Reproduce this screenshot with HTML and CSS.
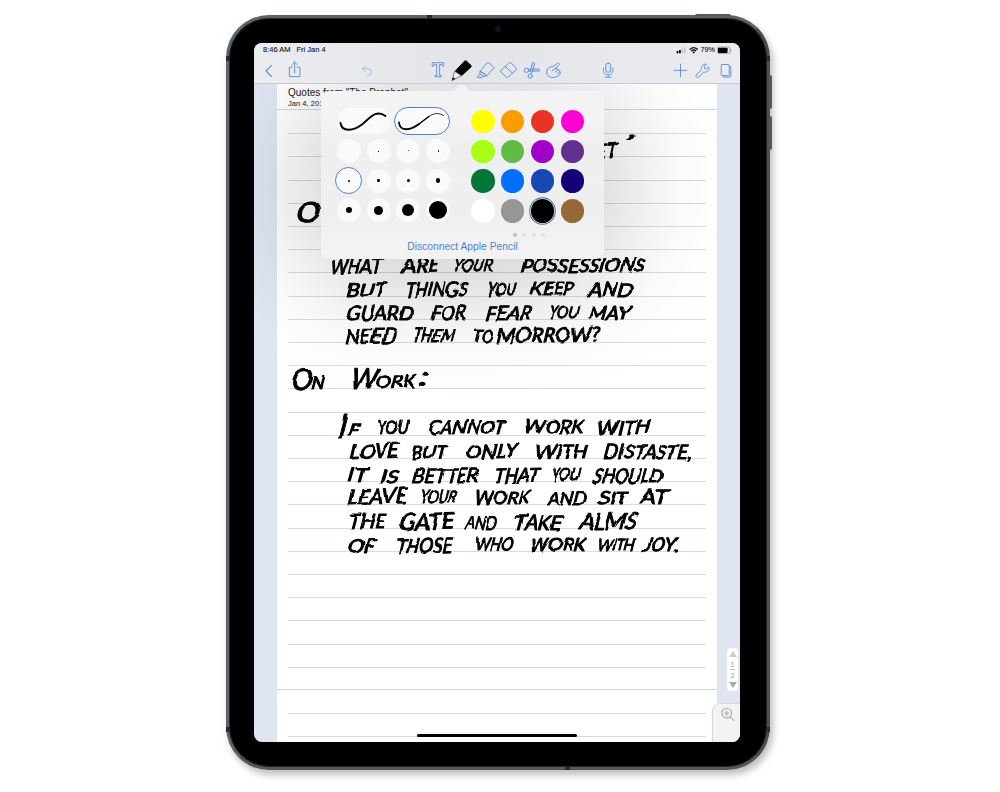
FILE: index.html
```html
<!DOCTYPE html>
<html lang="en">
<head>
<meta charset="utf-8">
<title>Notes</title>
<link rel="stylesheet" href="styles.css">
</head>
<body>
<div class="tablet">
  <i class="key key-top"></i><i class="key key-up"></i><i class="key key-down"></i>
  <i class="seam seam-top"></i><i class="seam seam-bottom"></i><i class="seam seam-l1"></i><i class="seam seam-l2"></i><i class="seam seam-r1"></i><i class="seam seam-r2"></i>
  <i class="camera"></i>
  <div class="screen">
    <header class="chrome">
      <div class="status">
        <span>8:46 AM</span><span class="date">Fri Jan 4</span>
        <svg class="signal" viewBox="675 46 22 9" width="22" height="9"><path d="M675.6 51h1.8v2.300h-1.800zM678 50h1.800v3.300H678z"/><path d="M680.500 48.600h1.600v4.700h-1.600zM682.900 47.300h1.600v6h-1.600z" fill="#c3c5ca"/><g fill="none" stroke="#111" stroke-width="1.3"><path d="M688.700 49.400q4-3.500 8 0M690.200 51.100q2.500-2.200 5 0"/></g><path d="M691.300 52l1.400 1.500 1.400-1.500q-1.400-1.200-2.800 0z"/></svg>
        <span class="percent">79%</span>
        <svg class="battery" viewBox="717 46 15 9" width="15" height="9"><rect x="717.300" y="47" width="12.700" height="6.600" rx="1.500" fill="none" stroke="#777" stroke-width=".6"/><rect x="718" y="47.700" width="9.600" height="5.200" rx=".8"/><path d="M730.700 49.200q1.500 1 0 2.200z" fill="#777"/></svg>
      </div>
      <nav class="tools">
        <svg class="icon back" viewBox="261 59 16 24"><path d="M271.3 65.6L266 70.9l5.3 5.3" stroke-width="1.3"/></svg>
        <svg class="icon share" viewBox="285 59 20 24"><path d="M292 67.3h-2.7v9.3h10.6v-9.3h-2.7M294.6 73V62M291.8 64.8l2.8-2.8 2.8 2.8"/></svg>
        <svg class="icon undo" viewBox="357 59 20 24"><path d="M365.5 66l-3 2.7 3 2.8M362.7 68.7h5.3a3.3 3.3 0 0 1 0 6.700h-.8"/></svg>
        <div class="pens">
          <svg class="icon" viewBox="426 59 23.3 24"><path d="M432.6 62.700h11v3.500h-1.100l-.5-1.700h-2.400v11h1.700v1.300h-6.200v-1.300h1.600v-11h-2.500l-.5 1.700h-1.100z" fill="#dfe8f7"/></svg>
          <svg class="icon" viewBox="449.3 59 23.3 24"><path d="M455.500 71.200l9.300-10q.9-.7 2 0l4.500 4.200q.7.8 0 1.500l-9.200 8.500z" fill="#000" stroke="#000"/><path d="M455.200 71.500l6.500 4.300-9 4.500z" fill="#eee" stroke="#555" stroke-width=".7"/><path d="M453.300 77.300l2.500 1.500-3.800 2z" fill="#111" stroke="none"/></svg>
          <svg class="icon" viewBox="472.6 59 23.3 24"><path d="M480 71l6.800-8.200q.7-.7 1.500 0l5 4q.7.6 0 1.500l-6.900 7.400zM480 71l6.400 4.700-3.400.8-3.300-2.400zM479.700 74.100l-3 3.100 4 .4 2.300-1.100"/></svg>
          <svg class="icon" viewBox="495.9 59 23.3 24"><path d="M500.700 70.400l8.500-7.700q.8-.6 1.600.1l5.500 5.300q.8.800 0 1.500l-8.400 7.600q-.8.6-1.600-.1l-5.600-5.200q-.8-.8 0-1.500zM505.100 66.500l7.200 6.700"/></svg>
          <svg class="icon" viewBox="519.2 59 23.3 24"><path d="M530.600 70.500l2-7.600q1.500-.7 2.200.4l-2 8-1.500 2.600M528.800 69.200l10.300-.2q1.100.9.500 2l-10.800.3" fill="#c7d8f3"/><circle cx="526.600" cy="70.200" r="2.200"/><circle cx="530.400" cy="76" r="2.100"/></svg>
          <svg class="icon" viewBox="542.5 59 23.3 24"><path d="M547.700 69.600q1.100-2.300 3.200-2.700l2.400-.3 4.700-3.300q1.200-.5 1.800.4.400.8-.5 1.600l-4.300 3.800q1.600-.9 2.600-.3.700.6.500 1.400 1.500-.6 2.200.2.500.8-.1 1.600 1 .3.700 1.300-.6 1.600-3 3-2.700 1.700-6 1.200-3-.5-4.400-3-1.200-2.500.2-4.900zM555 69.100l-2.300 1.700M558.100 70.200l-2.300 1.900M560.200 72l-2.200 1.700"/></svg>
        </div>
        <svg class="icon mic" viewBox="598 59 20 24"><rect x="605.700" y="63" width="5" height="9.300" rx="2.500" fill="#d9e4f7"/><path d="M603.500 68.300v2.200a4.700 4.500 0 0 0 9.400 0v-2.200M608.200 75v2.200M605 77.200h6.400"/></svg>
        <svg class="icon plus" viewBox="670 59 20 24"><path d="M680.500 64.100v12.600M674.200 70.400h12.600"/></svg>
        <svg class="icon wrench" viewBox="692 59 21 24"><path d="M696.400 74.700l5.200-5c-.9-3 1.200-5.900 4.700-5.500l-2.100 2.600.4 1.900 2 .2 2.300-2c.7 3.700-2.300 6-5.200 5.200l-5.100 4.900c-1.800 1.400-3.700-.6-2.200-2.300z"/></svg>
        <svg class="icon pages" viewBox="715 59 20 24"><path d="M722.200 64.500h6q1 0 1 1v9.200q0 1-1 1h-6q-1 0-1-1v-9.200q0-1 1-1zM729.300 66.300h.7q.8 0 .8.800v9q0 1-1 1h-6q-1 0-1-1.200"/></svg>
      </nav>
    </header>
    <main class="desk">
      <article class="paper">
        <div class="heading"><h1>Quotes from "The Prophet"</h1><p>Jan 4, 2019</p></div>
        <div class="rules"></div>
        <div class="last-rule"></div>
        <div class="foot"></div>
      </article>
      <div class="shade"></div>
      <svg class="ink" viewBox="254 84 486 658" width="486" height="658">
        <defs><filter id="hand" x="-5%" y="-5%" width="110%" height="110%"><feTurbulence type="fractalNoise" baseFrequency=".05" numOctaves="1" seed="8"/><feDisplacementMap in="SourceGraphic" scale="6" xChannelSelector="R" yChannelSelector="G"/></filter></defs>
        <g id="words" filter="url(#hand)"></g>
      </svg>
      <div class="pager"><i class="up"></i><span>1</span><b></b><span>2</span><i class="down"></i></div>
      <div class="magnify"><svg viewBox="0 0 16 16" width="16" height="16"><circle cx="6.700" cy="6.200" r="4.900"/><path d="M10.300 9.800l4 4M4 6.200h5.400M6.700 3.500v5.400"/></svg></div>
      <div class="home"></div>
    </main>
    <section class="popover">
      <svg class="tip" viewBox="0 0 24 8" width="24" height="8"><path d="M0 8Q4 7.500 8 3Q12-2 16 3Q20 7.500 24 8z"/></svg>
      <div class="choices">
        <div class="strokes">
          <div class="styles">
            <div class="style"><svg viewBox="0 0 54 26" width="54" height="26"><path d="M3.500 15C5 25 17 22.500 25 16.500C33 10 39 1 48.500 8" stroke-width="1.900"/></svg></div>
            <div class="style chosen"><svg viewBox="0 0 54 26" width="54" height="26"><path d="M4 14.500C5 24.500 16 22 24 16" stroke-width="1.800"/><path d="M23 16.700C32 10 39 1.500 48.500 7.500" stroke-width=".8"/><path d="M23 16.700Q30 11.500 34 8.500" stroke-width="1.200"/></svg></div>
          </div>
          <div class="dots" id="dots"></div>
        </div>
        <div class="palette">
          <div class="colors" id="colors"></div>
          <div class="pages-dots"><i></i><i></i><i></i><i></i></div>
        </div>
      </div>
      <div class="link">Disconnect Apple Pencil</div>
    </section>
  </div>
</div>
<script src="app.js"></script>
</body>
</html>
```

FILE: styles.css
```css
* { box-sizing: border-box; }
body { display: flow-root; min-height: 792px; margin: 0; background: #fff; font-family: "Liberation Sans", Arial, sans-serif; }
.tablet { position: relative; width: 544px; height: 755px; margin: 15px 0 0 226px; padding: 25px 27px 25px 25px; border: 3px solid #56595b; border-top-color: #5b6366; border-right-color: #4b4d4f; border-left-color: #5c6668; border-radius: 43px; background: #000; box-shadow: inset 0 0 0 1px #252728, 3px 5px 7px rgba(0,0,0,.26); }
.key { position: absolute; background: #55585a; }
.key-top { left: 466px; top: -4px; width: 36px; height: 2px; border-radius: 2px 2px 0 0; }
.key-up, .key-down { left: 540px; width: 3px; height: 34px; border-radius: 0 2px 2px 0; }
.key-up { top: 57px; }
.key-down { top: 98px; }
.seam { position: absolute; background: #292c2e; }
.seam-top, .seam-bottom { width: 5px; height: 3px; }
.seam-top { left: 198px; top: -3px; }
.seam-bottom { left: 336px; bottom: -3px; }
.seam-l1, .seam-l2 { left: -3px; width: 3px; height: 5px; }
.seam-r1, .seam-r2 { right: -3px; width: 3px; height: 5px; }
.seam-l1, .seam-r1 { top: 38px; }
.seam-l2, .seam-r2 { top: 709px; }
.camera { position: absolute; left: 266px; top: 8px; width: 6px; height: 6px; border-radius: 50%; background: #11161a; }
.screen { position: relative; display: flex; flex-direction: column; width: 486px; height: 699px; overflow: hidden; border-radius: 8px; background: #dfe6f1; }
.chrome { height: 41px; background: linear-gradient(90deg, #ebecef, #e4e5e9 45%, #ebecef); border-bottom: 1px solid #c5ccd7; }
.status { display: flex; align-items: center; height: 14px; padding-left: 9px; font-size: 7.5px; line-height: 14px; color: #111; -webkit-text-stroke: .1px #111; white-space: nowrap; }
.status .date { margin-left: 6px; }
.signal { margin-left: auto; margin-right: 3px; }
.percent { font-size: 7.2px; margin-right: 2px; }
.battery { margin-right: 8px; }
.tools { display: flex; height: 26px; padding: 2px 0 0 7px; }
.icon { display: block; flex: none; height: 24px; overflow: visible; fill: none; stroke: #5e8fda; stroke-width: .95; stroke-linejoin: round; stroke-linecap: round; }
.back { width: 16px; }
.share { width: 20px; margin-left: 8px; }
.undo { width: 20px; margin-left: 52px; opacity: .5; }
.pens { display: flex; margin-left: 49px; }
.pens .icon { width: 23.3px; }
.mic { width: 20px; margin-left: 32.2px; }
.plus { width: 20px; margin-left: 52px; }
.wrench { width: 21px; margin-left: 2px; }
.pages { width: 20px; margin-left: 2px; }
.desk { position: relative; flex: 1; overflow: hidden; }
.paper { display: flex; flex-direction: column; width: 440px; height: 658px; margin-left: 23px; background: #fff; }
.heading { height: 26px; padding: 4px 0 0 11px; border-bottom: 1px solid #cbd8e5; color: #222; }
.heading h1 { margin: 0; font-size: 10px; line-height: 10px; font-weight: 400; white-space: nowrap; }
.heading p { margin: 1px 0 0; font-size: 7.6px; line-height: 9px; }
.rules { height: 557px; margin: 1px 11px 0; background: repeating-linear-gradient(to bottom, transparent 0 22.2px, #d5dce8 22.2px 23.2px); }
.last-rule { height: 22px; background: linear-gradient(#c9d6e8, #c9d6e8) 0 21px / 100% 1px no-repeat; }
.foot { flex: 1; margin: 0 11px; background: repeating-linear-gradient(to bottom, transparent 0 22.5px, #d5dce8 22.5px 23.5px); }
.ink { position: absolute; left: 0; top: 0; font-family: Lato, "Liberation Sans", sans-serif; font-style: italic; font-weight: 400; fill: #000; stroke: #000; stroke-width: 1; stroke-linejoin: round; }
.shade { position: absolute; left: 67px; top: 7px; width: 283px; height: 168px; border-radius: 60px; box-shadow: 0 12px 100px 26px rgba(0,0,0,.18); pointer-events: none; }
.pager { position: absolute; left: 473px; top: 564px; display: flex; flex-direction: column; align-items: center; width: 11px; height: 43px; padding: 3px 0; border-radius: 4px; background: #fff; color: #999; font-size: 7px; }
.pager span { line-height: 9px; height: 10px; padding-top: 1px; }
.pager b { flex: none; width: 5px; height: 1px; background: #bbb; }
.pager i { border: 4px solid transparent; border-top: 0; border-bottom: 6px solid #ccc; }
.pager .up { margin-bottom: 2px; }
.pager .down { margin-top: 2px; border-bottom: 0; border-top: 6px solid #aaa; }
.magnify { position: absolute; left: 458px; top: 619px; width: 29px; height: 40px; padding: 3px 0 0 8px; background: #f2f3f4; border: 1px solid #d3d6db; border-radius: 8px 0 8px 0; }
.magnify svg { display: block; margin: 0 -1px; fill: none; stroke: #aaa; stroke-width: 1.1; }
.home { position: absolute; left: 163px; top: 650px; width: 160px; height: 3px; border-radius: 2px; background: #000; }
.popover { position: absolute; left: 67px; top: 48px; width: 283px; height: 168px; padding: 15px 0 0 13px; border-radius: 8px; background: linear-gradient(#f3f3f3 18%, #eeeeef 36%, #f0f0f0 53%, #eeeeef 68%, #f2f2f2 88%); }
.tip { position: absolute; left: 129px; top: -7px; fill: #f3f3f3; }
.choices { display: flex; height: 134px; }
.strokes { width: 134px; }
.styles { display: flex; gap: 4px; height: 30px; align-items: center; padding-left: 2.5px; }
.style { width: 53px; height: 26px; border-radius: 13px; background: #fafafa; }
.style svg { display: block; fill: none; stroke: #000; stroke-linecap: round; }
.chosen { width: 56px; height: 28px; border: 1px solid #4f80d0; border-radius: 14px; }
.dots { display: grid; grid-template-columns: repeat(4, 29.8px); grid-auto-rows: 29.8px; }
.dot { display: flex; align-items: center; justify-content: center; place-self: center; width: 24px; height: 24px; border-radius: 50%; background: #fafafa; }
.dot.picked { width: 27px; height: 27px; border: 1px solid #4f80d0; }
.dot i { border-radius: 50%; background: #000; }
.palette { width: 119px; }
.colors { display: grid; grid-template-columns: repeat(4, 29.8px); grid-auto-rows: 29.8px; padding-top: .6px; }
.color { place-self: center; width: 23.4px; height: 23.4px; border-radius: 50%; }
.color.picked { box-shadow: 0 0 0 .7px #f2f2f2, 0 0 0 1.7px #52658d; }
.pages-dots { display: flex; gap: 5.4px; padding: 7px 0 0 45px; }
.pages-dots i { width: 4px; height: 4px; border-radius: 50%; background: #dedede; }
.pages-dots i:first-child { background: #c0c0c0; }
.link { padding: 0 13px 0 0; font-size: 10.3px; line-height: 13px; text-align: center; color: #4b83d7; }
```

FILE: app.js
```js
// Handwritten words: text, left, baseline, width, size, tilt in degrees.
const words = [
  ["ET", 593, 159, 24, 20, -4], ["’", 621, 151, 9, 25, 8],
  ["O", 296, 223, 25, 27, -5],
  ["WHAT", 330, 274, 51, 20, -2], ["ARE", 402, 272, 36, 20, -1], ["YOUR", 453, 272, 40, 19, 0], ["POSSESSIONS", 520, 272, 125, 19, 0],
  ["BUT", 345, 297, 40, 19, -1], ["THINGS", 404, 297, 63, 20, -1], ["YOU", 486, 296, 30, 18, 0], ["KEEP", 530, 295, 43, 18, 0], ["AND", 587, 297, 45, 20, 0],
  ["GUARD", 346, 320, 67, 20, 0], ["FOR", 431, 320, 35, 20, 0], ["FEAR", 484, 320, 47, 20, 0], ["YOU", 548, 318, 30, 17, 0], ["MAY", 588, 319, 41, 18, 0],
  ["NEED", 345, 344, 50, 20, -1], ["THEM", 412, 342, 41, 19, 0], ["TO", 473, 342, 20, 18, 0], ["MORROW?", 496, 343, 104, 20, -1],
  ["O", 290, 390, 22, 30, 0], ["N", 311, 388, 13, 16, 0], ["W", 350, 389, 27, 29, 0], ["ORK", 375, 388, 40, 18, -1], [":", 418, 385, 10, 25, 4],
  ["I", 337, 438, 8, 32, 0], ["F", 347, 436, 12, 17, 0], ["YOU", 376, 434, 31, 19, -1], ["CANNOT", 428, 434, 77, 19, 0], ["WORK", 524, 433, 59, 18, 0], ["WITH", 597, 435, 54, 19, -2],
  ["LOVE", 349, 459, 50, 20, -2], ["BUT", 411, 459, 35, 18, -1], ["ONLY", 465, 459, 51, 19, -2], ["WITH", 535, 459, 53, 19, -1], ["DISTASTE,", 603, 459, 89, 20, 0],
  ["IT", 348, 482, 18, 19, 0], ["IS", 380, 483, 18, 19, 0], ["BETTER", 412, 483, 66, 20, 0], ["THAT", 494, 483, 44, 20, -1], ["YOU", 551, 481, 28, 18, 0], ["SHOULD", 592, 483, 70, 20, 0],
  ["LEAVE", 347, 505, 60, 21, -2], ["YOUR", 420, 503, 36, 17, 0], ["WORK", 474, 504, 56, 18, 0], ["AND", 547, 505, 39, 19, 0], ["SIT", 598, 504, 29, 18, 0], ["AT", 640, 504, 27, 20, 0],
  ["THE", 348, 529, 37, 21, 0], ["GATE", 399, 530, 54, 22, -2], ["AND", 465, 530, 31, 19, 0], ["TAKE", 513, 530, 49, 20, 0], ["ALMS", 579, 529, 57, 22, 0],
  ["OF", 347, 553, 28, 19, 0], ["THOSE", 395, 553, 57, 20, -1], ["WHO", 474, 551, 40, 18, -1], ["WORK", 529, 551, 56, 18, 0], ["WITH", 597, 551, 38, 17, 0], ["JOY.", 643, 552, 36, 20, 0]
];
const ns = "http://www.w3.org/2000/svg";
for (const [text, x, y, width, size, tilt] of words) {
  const t = document.createElementNS(ns, "text");
  t.textContent = text;
  t.setAttribute("x", x);
  t.setAttribute("y", y);
  t.setAttribute("font-size", size);
  t.setAttribute("textLength", width);
  t.setAttribute("lengthAdjust", "spacingAndGlyphs");
  t.setAttribute("transform", `rotate(${tilt} ${x} ${y}) translate(${x} ${y}) skewX(-8) translate(${-x} ${-y})`);
  document.getElementById("words").append(t);
}

[0, .6, .9, 1.3, 2, 2.7, 3.4, 4.4, 6, 9, 12, 18].forEach((size, i) => {
  const cell = document.createElement("div");
  cell.className = i === 4 ? "dot picked" : "dot";
  const point = document.createElement("i");
  point.style.width = point.style.height = size + "px";
  cell.append(point);
  document.getElementById("dots").append(cell);
});

["#ffff00", "#fb9c00", "#ea3423", "#ff00d4", "#a8ff13", "#61bb46", "#a100c9", "#62308f", "#00763a", "#0070ff", "#1649b3", "#130078", "#ffffff", "#969696", "#000000", "#966737"].forEach((color, i) => {
  const swatch = document.createElement("div");
  swatch.className = i === 14 ? "color picked" : "color";
  swatch.style.background = color;
  document.getElementById("colors").append(swatch);
});
```
